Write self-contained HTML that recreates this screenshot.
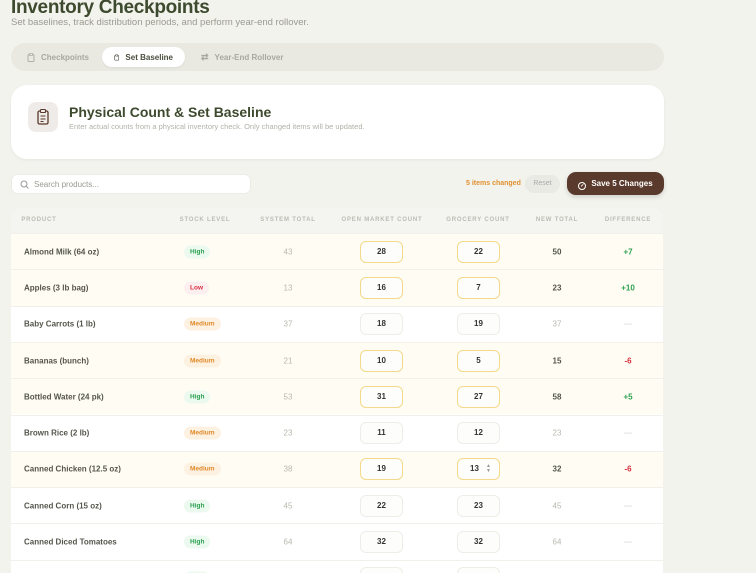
<!DOCTYPE html>
<html style="width:756px;height:573px;overflow:hidden"><head><meta charset="utf-8"><style>
*{box-sizing:border-box;margin:0;padding:0}
body{width:756px;height:573px;overflow:hidden;background:#f3f3ee;font-family:"Liberation Sans",sans-serif;position:relative;color:#3a3a33}
.abs{position:absolute}
h1{position:absolute;left:11px;top:-3px;font-size:19px;font-weight:bold;color:#3d4a2e;letter-spacing:-0.3px}
.sub{left:11px;top:17px;font-size:9.5px;color:#9a9a90}
.tabs{left:11px;top:43px;width:653px;height:28px;background:#e9e9e2;border-radius:14px}
.tab{position:absolute;top:4px;height:20px;font-size:8px;font-weight:bold;color:#a8a89e;display:flex;align-items:center;gap:6px;padding:0 12px;white-space:nowrap}
.tab.on{background:#fff;color:#4a4f3e;border-radius:10px;box-shadow:0 1px 2px rgba(0,0,0,.06)}
.card{left:11px;top:85px;width:653px;height:74px;background:#fff;border-radius:16px;box-shadow:0 1px 3px rgba(0,0,0,.06)}
.ic{left:17px;top:17px;width:30px;height:30px;background:#efebe8;border-radius:8px}
.ct{left:58px;top:19px;font-size:14px;font-weight:bold;color:#3d4a2e}
.cs{left:58px;top:37px;font-size:7.5px;color:#b2b2a8}
.search{left:11px;top:174px;width:240px;height:20px;background:#fff;border-radius:6px;border:1px solid #ecebe5;font-size:8px;color:#9a9a90;padding:5px 0 0 22px}
.chg{left:466px;top:180px;font-size:7px;font-weight:bold;color:#e0902f}
.reset{left:525px;top:175px;width:35px;height:18px;background:#eaeae5;border-radius:9px;font-size:7px;color:#aaa;text-align:center;line-height:18px}
.save{left:567px;top:172px;width:97px;height:23px;background:#5a3a2c;border-radius:9px;color:#fff;font-size:8px;font-weight:bold;line-height:23px;text-align:center;box-shadow:0 2px 5px rgba(0,0,0,.15)}
.tbl{left:11px;top:208px;width:652px;height:365px;background:#fff;border-radius:12px 12px 0 0;overflow:hidden}
.th{position:absolute;top:0;height:25px;width:652px;background:#f4f4f1}
.th span{position:absolute;top:9px;font-size:6px;font-weight:bold;letter-spacing:.8px;color:#bcbcb2;transform:translateX(-50%);white-space:nowrap}
.row{position:absolute;left:0;width:652px;height:36.3px;border-top:1px solid #f1f0ea}
.row.c{background:#fffdf3}
.row>*{position:absolute;top:50%;transform:translateY(-50%)}
.pn{left:13px;font-size:8px;font-weight:bold;color:#55554c}
.b{left:173px;font-size:6.5px;font-weight:bold;padding:3px 6px;border-radius:7px}
.hi{background:#ecf9ef;color:#2aa150}.lo{background:#fdeef0;color:#d93040}.me{background:#fdf1e2;color:#e08a28}
.n{font-size:8px;transform:translate(-50%,-50%)}
.sy{left:277px;color:#b8b8ae}
.in{width:43px;height:22px;border:1.3px solid #eeede7;border-radius:6px;background:#fdfdfb;font-size:8px;font-weight:bold;color:#333;text-align:center;line-height:20px}
.in.y{border-color:#f3d98a}
.om{left:349px}.gr{left:446px}
.nt{left:546px;font-weight:bold;color:#55554c}.nt.g{font-weight:normal;color:#b8b8ae}
.df{left:617px;font-weight:bold}.pos{color:#2aa150}.neg{color:#d93040}.ds{color:#ddd}
</style></head><body>
<h1>Inventory Checkpoints</h1>
<div class="abs sub">Set baselines, track distribution periods, and perform year-end rollover.</div>
<div class="abs tabs">
 <div class="tab" style="left:4px"><svg width="8" height="9" viewBox="0 0 8 9"><rect x="1" y="1.5" width="6" height="7" rx="1" fill="none" stroke="#b0b0a6"/><rect x="2.5" y=".5" width="3" height="2" fill="#e9e9e2" stroke="#b0b0a6" stroke-width=".8"/></svg>Checkpoints</div>
 <div class="tab on" style="left:91px;width:83px"><svg width="8" height="9" viewBox="0 0 8 9"><rect x="1" y="1.5" width="6" height="7" rx="1" fill="none" stroke="#55554c"/><rect x="2.5" y=".5" width="3" height="2" fill="#fff" stroke="#55554c" stroke-width=".8"/></svg>Set Baseline</div>
 <div class="tab" style="left:178px"><span style="font-size:9px">⇄</span>Year-End Rollover</div>
</div>
<div class="abs card">
 <div class="abs ic"><svg width="30" height="30" viewBox="0 0 30 30"><rect x="10" y="9" width="10" height="13" rx="1.5" fill="none" stroke="#5a3a2c" stroke-width="1.3"/><rect x="12.5" y="7.5" width="5" height="3" rx=".8" fill="#efebe8" stroke="#5a3a2c" stroke-width="1.1"/><path d="M12.5 14h5M12.5 17h5M12.5 19.5h3" stroke="#5a3a2c" stroke-width="1"/></svg></div>
 <div class="abs ct">Physical Count &amp; Set Baseline</div>
 <div class="abs cs">Enter actual counts from a physical inventory check. Only changed items will be updated.</div>
</div>
<div class="abs search"><svg class="abs" style="left:8px;top:5px" width="9" height="9" viewBox="0 0 9 9"><circle cx="4" cy="4" r="3" fill="none" stroke="#999" stroke-width="1"/><path d="M6.2 6.2L8.5 8.5" stroke="#999"/></svg>Search products...</div>
<div class="abs chg">5 items changed</div>
<div class="abs reset">Reset</div>
<div class="abs save"><span style="display:inline-block;width:8px;height:8px;border:1px solid #fff;border-radius:50%;vertical-align:-1px;margin-right:5px;font-size:5px;line-height:6px">✓</span>Save 5 Changes</div>
<div class="abs tbl">
 <div class="th"><span style="left:28px">PRODUCT</span><span style="left:194px">STOCK LEVEL</span><span style="left:277px">SYSTEM TOTAL</span><span style="left:371px">OPEN MARKET COUNT</span><span style="left:467px">GROCERY COUNT</span><span style="left:546px">NEW TOTAL</span><span style="left:617px">DIFFERENCE</span></div>
 <div class="row c" style="top:25px"><span class="pn">Almond Milk (64 oz)</span><span class="b hi">High</span><span class="n sy">43</span><span class="in y om">28</span><span class="in y gr">22</span><span class="n nt">50</span><span class="n df pos">+7</span></div>
 <div class="row c" style="top:61.3px"><span class="pn">Apples (3 lb bag)</span><span class="b lo">Low</span><span class="n sy">13</span><span class="in y om">16</span><span class="in y gr">7</span><span class="n nt">23</span><span class="n df pos">+10</span></div>
 <div class="row" style="top:97.6px"><span class="pn">Baby Carrots (1 lb)</span><span class="b me">Medium</span><span class="n sy">37</span><span class="in om">18</span><span class="in gr">19</span><span class="n nt g">37</span><span class="n df ds">—</span></div>
 <div class="row c" style="top:133.9px"><span class="pn">Bananas (bunch)</span><span class="b me">Medium</span><span class="n sy">21</span><span class="in y om">10</span><span class="in y gr">5</span><span class="n nt">15</span><span class="n df neg">-6</span></div>
 <div class="row c" style="top:170.2px"><span class="pn">Bottled Water (24 pk)</span><span class="b hi">High</span><span class="n sy">53</span><span class="in y om">31</span><span class="in y gr">27</span><span class="n nt">58</span><span class="n df pos">+5</span></div>
 <div class="row" style="top:206.5px"><span class="pn">Brown Rice (2 lb)</span><span class="b me">Medium</span><span class="n sy">23</span><span class="in om">11</span><span class="in gr">12</span><span class="n nt g">23</span><span class="n df ds">—</span></div>
 <div class="row c" style="top:242.8px"><span class="pn">Canned Chicken (12.5 oz)</span><span class="b me">Medium</span><span class="n sy">38</span><span class="in y om">19</span><span class="in y gr" style="padding-right:8px">13<span style="position:absolute;right:8px;top:0;font-size:5px;line-height:5px;color:#999;padding-top:5px">▲<br>▼</span></span><span class="n nt">32</span><span class="n df neg">-6</span></div>
 <div class="row" style="top:279.1px"><span class="pn">Canned Corn (15 oz)</span><span class="b hi">High</span><span class="n sy">45</span><span class="in om">22</span><span class="in gr">23</span><span class="n nt g">45</span><span class="n df ds">—</span></div>
 <div class="row" style="top:315.4px"><span class="pn">Canned Diced Tomatoes</span><span class="b hi">High</span><span class="n sy">64</span><span class="in om">32</span><span class="in gr">32</span><span class="n nt g">64</span><span class="n df ds">—</span></div>
 <div class="row" style="top:351.7px"><span class="b hi">High</span><span class="in om">30</span><span class="in gr">30</span></div>
</div>
</body></html>
